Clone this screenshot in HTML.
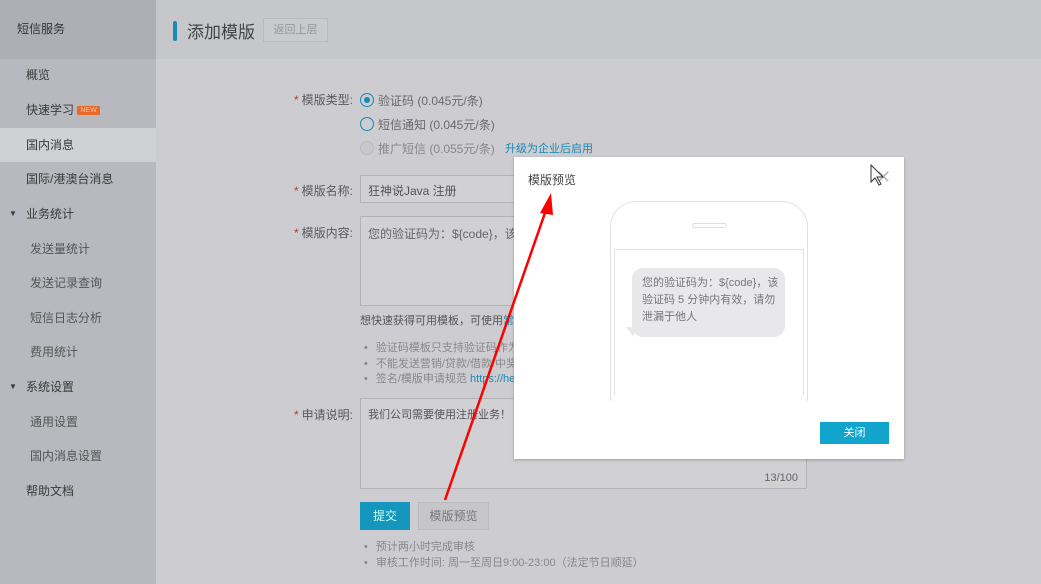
<!DOCTYPE html>
<html><head><meta charset="utf-8"><style>
*{margin:0;padding:0;box-sizing:border-box}
body{width:1041px;height:584px;overflow:hidden;position:relative;background:#cdccd0;font-family:"Liberation Sans","Noto Sans CJK SC",sans-serif;font-size:12px;color:#555}
.a{position:absolute}
#side{left:0;top:0;width:156px;height:584px;background:#b7b9be}
#side .hd{left:0;top:0;width:156px;height:59px;background:#acafb4;color:#333;font-size:12px;padding:20px 0 0 17px}
.it{position:absolute;left:0;width:156px;height:34px;line-height:34px;color:#3a3a3a;padding-left:26px;font-size:12px}
.sub{padding-left:30px;color:#555}
#top{left:156px;top:0;width:885px;height:59px;background:#c6c7cb}
.lab{position:absolute;width:100px;text-align:right;color:#5a5a5a}
.lab b{color:#c0392b;font-weight:normal;margin-right:3px}
.txt{color:#6a6a6a}
.box{position:absolute;border:1px solid #b3b3b6;background:#d1d1d4}
.li{position:absolute;color:#888;font-size:11px}
.li:before{content:"•";margin:0 8px 0 0;color:#888}
</style></head><body>
<div id="side" class="a">
<div class="a hd">短信服务</div>
<div class="it" style="top:58px">概览</div>
<div class="it" style="top:93px">快速学习 <span style="background:#e8692a;color:#f5c8a8;font-size:7px;padding:1px 3px;border-radius:1px;vertical-align:2px">NEW</span></div>
<div class="it" style="top:128px;background:#d0d1d4">国内消息</div>
<div class="it" style="top:162px">国际/港澳台消息</div>
<div class="it" style="top:197px">业务统计<span class="a" style="left:9px;top:0;font-size:8px">▼</span></div>
<div class="it sub" style="top:232px">发送量统计</div>
<div class="it sub" style="top:266px">发送记录查询</div>
<div class="it sub" style="top:301px">短信日志分析</div>
<div class="it sub" style="top:335px">费用统计</div>
<div class="it" style="top:370px">系统设置<span class="a" style="left:9px;top:0;font-size:8px">▼</span></div>
<div class="it sub" style="top:405px">通用设置</div>
<div class="it sub" style="top:439px">国内消息设置</div>
<div class="it" style="top:474px">帮助文档</div>
</div>
<div id="top" class="a">
<div class="a" style="left:17px;top:21px;width:4px;height:20px;background:#1a8ab5;border-radius:2px"></div>
<div class="a" style="left:31px;top:18px;font-size:17px;color:#444">添加模版</div>
<div class="a" style="left:107px;top:18px;width:65px;height:24px;border:1px solid #bbb;background:#c9cacd;color:#999;text-align:center;line-height:22px;font-size:11px">返回上层</div>
</div>
<div class="lab" style="left:253px;top:91px"><b>*</b>模版类型:</div>
<div class="a" style="left:360px;top:93px;width:14px;height:14px;border:1px solid #1a8ab5;border-radius:50%"><div class="a" style="left:3px;top:3px;width:6px;height:6px;background:#1a8ab5;border-radius:50%"></div></div>
<div class="a txt" style="left:378px;top:92px">验证码 (0.045元/条)</div>
<div class="a" style="left:360px;top:117px;width:14px;height:14px;border:1px solid #1a8ab5;border-radius:50%"></div>
<div class="a txt" style="left:378px;top:116px">短信通知 (0.045元/条)</div>
<div class="a" style="left:360px;top:141px;width:14px;height:14px;border:1px solid #bbb;background:#c8c8cb;border-radius:50%"></div>
<div class="a" style="left:378px;top:140px;color:#888">推广短信 (0.055元/条)</div>
<div class="a" style="left:505px;top:140px;color:#1a8ab5;font-size:11px">升级为企业后启用</div>
<div class="lab" style="left:253px;top:182px"><b>*</b>模版名称:</div>
<div class="box" style="left:360px;top:175px;width:200px;height:28px;padding:6px 7px;color:#555">狂神说Java 注册</div>
<div class="lab" style="left:253px;top:224px"><b>*</b>模版内容:</div>
<div class="box" style="left:360px;top:216px;width:200px;height:90px;padding:8px 7px;color:#666">您的验证码为：${code}，该验证</div>
<div class="a" style="left:360px;top:312px;color:#555;font-size:11px">想快速获得可用模板，可使用<span style="color:#1a8ab5">常用</span></div>
<div class="li" style="left:364px;top:339px">验证码模板只支持验证码作为</div>
<div class="li" style="left:364px;top:355px">不能发送营销/贷款/借款/中奖/</div>
<div class="li" style="left:364px;top:370px">签名/模版申请规范 <span style="color:#1a8ab5">https://help</span></div>
<div class="lab" style="left:253px;top:406px"><b>*</b>申请说明:</div>
<div class="box" style="left:360px;top:398px;width:447px;height:91px;padding:7px 7px;color:#555;font-size:11px">我们公司需要使用注册业务！<span class="a" style="right:8px;bottom:4px;color:#666">13/100</span></div>
<div class="a" style="left:360px;top:502px;width:50px;height:28px;background:#1496bd;color:#cfe;text-align:center;line-height:28px">提交</div>
<div class="a" style="left:418px;top:502px;width:71px;height:28px;background:#c6c6c9;border:1px solid #bdbdc0;color:#777;text-align:center;line-height:26px">模版预览</div>
<div class="li" style="left:364px;top:538px">预计两小时完成审核</div>
<div class="li" style="left:364px;top:554px">审核工作时间: 周一至周日9:00-23:00（法定节日顺延）</div>

<div class="a" style="left:514px;top:157px;width:390px;height:302px;background:#fff;box-shadow:0 1px 3px rgba(0,0,0,.25)">
<div class="a" style="left:14px;top:14px;color:#444;font-size:12px">模版预览</div>
<div class="a" style="left:362px;top:10px;color:#bbb;font-size:18px">✕</div>
<div class="a" style="left:96px;top:44px;width:198px;height:200px;border:1px solid #e2e2e2;border-bottom:none;border-radius:26px 26px 0 0"></div>
<div class="a" style="left:178px;top:66px;width:35px;height:5px;border:1px solid #ddd;border-radius:3px"></div>
<div class="a" style="left:100px;top:92px;width:190px;height:146px;border:1px solid #e2e2e2;border-bottom:none"></div>
<div class="a" style="left:118px;top:111px;width:153px;height:69px;background:#e8e8eb;border-radius:11px;padding:7px 4px 6px 10px;color:#777;font-size:11px;line-height:17px;white-space:nowrap;overflow:hidden">您的验证码为：${code}，该<br>验证码 5 分钟内有效，请勿<br>泄漏于他人</div>
<div class="a" style="left:112px;top:170px;width:0;height:0;border-left:8px solid transparent;border-top:10px solid #e8e8eb"></div>
<div class="a" style="left:306px;top:265px;width:69px;height:22px;background:#11a4cc;color:#fff;text-align:center;line-height:22px;font-size:11px">关闭</div>
</div>
<svg class="a" style="left:0;top:0" width="1041" height="584"><line x1="445" y1="500" x2="546" y2="210" stroke="#f00" stroke-width="2.5"/><polygon points="551,193 540,213 553,215" fill="#f00"/><path d="M871 165 L871 182 L875 178 L879 185 L881 184 L877 177 L883 177 Z" fill="#fff" stroke="#333" stroke-width="1"/></svg>
</body></html>
